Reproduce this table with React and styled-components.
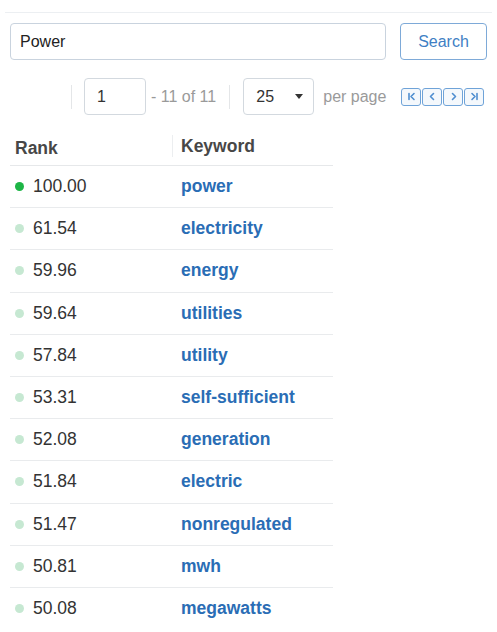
import React from 'react';
import styled, { createGlobalStyle } from 'styled-components';

const GlobalStyle = createGlobalStyle`
  body {
    margin: 0;
    background: #fff;
    font-family: "Liberation Sans", Arial, sans-serif;
  }
`

const Page = styled.div`
  width: 497px;
  height: 632px;
  overflow: hidden;
`

const TopRule = styled.div`
  margin: 12px 5px 0 5px;
  border-top: 1px solid #eceff2;
`

const SearchRow = styled.div`
  display: flex;
  gap: 14px;
  padding: 10px 0 0 10px;
`

const SearchInput = styled.input`
  box-sizing: border-box;
  width: 376px;
  height: 37px;
  border: 1px solid #c9d3de;
  border-radius: 4px;
  padding: 0 9px;
  font-family: inherit;
  font-size: 16px;
  color: #222;
  outline: none;
`

const SearchButton = styled.button`
  box-sizing: border-box;
  width: 87px;
  height: 37px;
  border: 1.5px solid #7eaad8;
  border-radius: 4px;
  background: #fff;
  color: #3f7fc4;
  font-family: inherit;
  font-size: 16px;
`

const PagerRow = styled.div`
  display: flex;
  align-items: center;
  height: 37px;
  margin-top: 18px;
  padding-left: 71px;
`

const Divider = styled.span`
  width: 1px;
  height: 24px;
  background: #e4e6e8;
  margin-right: ${p => p.$after}px;
`

const PageBox = styled.div`
  box-sizing: border-box;
  display: flex;
  align-items: center;
  justify-content: space-between;
  width: ${p => p.$w}px;
  height: 37px;
  border: 1px solid #d3d9df;
  border-radius: 4px;
  padding: 0 10px 0 12px;
  font-size: 16px;
  color: #333;
`

const Caret = styled.span`
  width: 0;
  height: 0;
  border-left: 4px solid transparent;
  border-right: 4px solid transparent;
  border-top: 5px solid #333;
`

const PagerText = styled.span`
  font-size: 16px;
  color: #9a9a9a;
  margin: 0 ${p => p.$right}px 0 ${p => p.$left}px;
  white-space: nowrap;
`

const NavGroup = styled.div`
  display: flex;
  gap: 1px;
  margin-left: 2px;
`

const NavButton = styled.span`
  box-sizing: border-box;
  display: flex;
  align-items: center;
  justify-content: center;
  width: 20px;
  height: 18px;
  border: 1.5px solid #6fa3d8;
  border-radius: 3px;
  background: #f4f8fc;
`

const Table = styled.div`
  width: 323px;
  margin: 16px 0 0 10px;
`

const HeadRow = styled.div`
  display: grid;
  grid-template-columns: 162px 1fr;
  height: 34px;
  border-bottom: 1px solid #e6e8ea;
`

const HeadCell = styled.div`
  display: flex;
  align-items: center;
  padding-left: ${p => p.$pad}px;
  font-size: 17.5px;
  font-weight: bold;
  color: #474747;
  border-left: ${p => (p.$sep ? '1px solid #eceef0' : 'none')};
  margin: ${p => (p.$sep ? '4px 0 8px' : '0')};
`

const Row = styled.div`
  display: grid;
  grid-template-columns: 162px 1fr;
  height: 41.2px;
  border-bottom: 1px solid ${p => (p.$last ? 'transparent' : '#e9ebed')};
  align-items: center;
`

const RankCell = styled.div`
  display: flex;
  align-items: center;
  padding-left: 5px;
  font-size: 17.5px;
  color: #333;
`

const Dot = styled.span`
  width: 9px;
  height: 9px;
  border-radius: 50%;
  background: ${p => (p.$top ? '#1db546' : '#c6e8d2')};
  margin-right: 9px;
`

const KeywordLink = styled.a`
  padding-left: 9px;
  font-size: 17.5px;
  font-weight: bold;
  color: #2a6db5;
  text-decoration: none;
`

const rows = [
  ['100.00', 'power'],
  ['61.54', 'electricity'],
  ['59.96', 'energy'],
  ['59.64', 'utilities'],
  ['57.84', 'utility'],
  ['53.31', 'self-sufficient'],
  ['52.08', 'generation'],
  ['51.84', 'electric'],
  ['51.47', 'nonregulated'],
  ['50.81', 'mwh'],
  ['50.08', 'megawatts'],
]

const navIcons = [
  'M4 3.5v6M9 3.5 6 6.5l3 3',
  'M7.5 3.5 4.5 6.5l3 3',
  'M5.5 3.5l3 3-3 3',
  'M4 3.5l3 3-3 3M9 3.5v6',
]

function NavIcon({ d }) {
  return (
    <svg width="13" height="13" viewBox="0 0 13 13">
      <path d={d} fill="none" stroke="#4f8ed0" strokeWidth="1.6" strokeLinecap="round" strokeLinejoin="round" />
    </svg>
  )
}

export default function App() {
  return (
    <Page>
      <GlobalStyle />
      <TopRule />
      <SearchRow>
        <SearchInput defaultValue="Power" />
        <SearchButton>Search</SearchButton>
      </SearchRow>

      <PagerRow>
        <Divider $after={12} />
        <PageBox $w={62}>1</PageBox>
        <PagerText $left={5} $right={13}>- 11 of 11</PagerText>
        <Divider $after={13} />
        <PageBox $w={71}>
          25
          <Caret />
        </PageBox>
        <PagerText $left={9} $right={13}>per page</PagerText>
        <NavGroup>
          {navIcons.map((d, i) => (
            <NavButton key={i}>
              <NavIcon d={d} />
            </NavButton>
          ))}
        </NavGroup>
      </PagerRow>

      <Table>
        <HeadRow>
          <HeadCell $pad={5}>Rank</HeadCell>
          <HeadCell $pad={8} $sep>Keyword</HeadCell>
        </HeadRow>
        {rows.map(([rank, word], i) => (
          <Row key={word} $last={i === rows.length - 1}>
            <RankCell>
              <Dot $top={i === 0} />
              {rank}
            </RankCell>
            <KeywordLink href="#">{word}</KeywordLink>
          </Row>
        ))}
      </Table>
    </Page>
  )
}
